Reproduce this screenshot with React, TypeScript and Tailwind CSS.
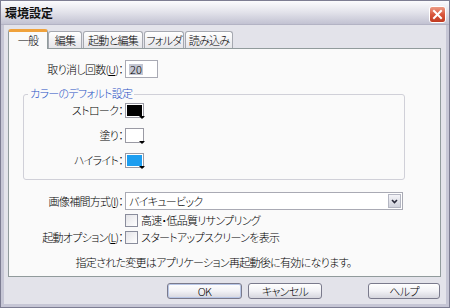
import React from "react";

const font = "[font-family:'Noto_Sans_CJK_JP','Noto_Sans',sans-serif] [font-feature-settings:'palt']";

function Swatch({ color }: { color: string }) {
  return (
    <div className="relative ml-[2px] w-[19px] h-[15px] border border-[#9a9aa4] p-[1px] bg-white">
      <div className="w-full h-full" style={{ background: color }} />
      <div className="absolute right-[-2px] bottom-[-2px] w-0 h-0 border-l-[3px] border-r-[3px] border-t-[3px] border-l-transparent border-r-transparent border-t-black" />
    </div>
  );
}

function Check() {
  return (
    <div className="ml-[2px] w-[13px] h-[13px] border border-[#8a8d9c] bg-gradient-to-br from-[#e4e4e8] to-white" />
  );
}

function Btn({ children, def, className }: { children: React.ReactNode; def?: boolean; className?: string }) {
  return (
    <div
      className={
        "h-[16px] flex items-center justify-center rounded-[3px] border border-[#7a7a8c] bg-gradient-to-b from-white via-[#f2f2f6] to-[#d6d6de] leading-none text-black " +
        (def ? "shadow-[inset_0_0_0_1px_#b8c6e6] " : "") +
        (className || "")
      }
    >
      {children}
    </div>
  );
}

const tab = "h-[17px] ml-[1px] whitespace-nowrap flex items-center justify-center border border-b-0 border-[#a5a8b0] rounded-t-[3px] bg-gradient-to-b from-white to-[#e6e6ea]";

export default function App() {
  return (
    <div className={"w-[450px] h-[308px] flex flex-col border border-[#7d7d92] bg-[#e3e3ea] text-[11px] font-light tracking-[-0.7px] leading-none text-black " + font}>
      {/* title bar */}
      <div className="h-[24px] shrink-0 flex items-center justify-between pl-[4px] pr-[3px] bg-gradient-to-b from-[#fbfbfd] via-[#e2e2ea] to-[#c2c2d2] border-b border-[#b3b3c4]">
        <span className="text-[12px] font-bold tracking-[0px] text-[#111]">環境設定</span>
        <div className="w-[17px] h-[17px] mt-[3px] rounded-[3px] border border-white bg-gradient-to-b from-[#eb9a84] via-[#d9563c] to-[#c03a20] flex items-center justify-center">
          <svg width="11" height="11" viewBox="0 0 11 11">
            <path d="M2 2 L9 9 M9 2 L2 9" stroke="white" strokeWidth="2" strokeLinecap="square" />
          </svg>
        </div>
      </div>

      {/* body */}
      <div className="flex-1 flex flex-col border-x-[3px] border-b-[3px] border-[#c6c6d5] pl-[4px]">
        {/* tabs */}
        <div className="h-[20px] mt-[3px] flex items-end relative z-10">
          <div className="w-[40px] h-[20px] mb-[-1px] whitespace-nowrap flex items-center justify-center border-x border-[#919b9c] border-t-[3px] border-t-[#f0a23c] rounded-t-[3px] bg-[#fafafa] pb-[1px]">
            一般
          </div>
          <div className={tab + " w-[34px] !ml-0"}>編集</div>
          <div className={tab + " w-[60px]"}>起動と編集</div>
          <div className={tab + " w-[40px]"}>フォルダ</div>
          <div className={tab + " w-[48px]"}>読み込み</div>
        </div>

        {/* panel */}
        <div className="w-[433px] h-[229px] border border-[#919b9c] bg-[#fafafa] flex flex-col">
          <div className="mt-[11px] h-[18px] flex items-center">
            <div className="w-[114px] text-right">
              取り消し回数(<span className="underline">U</span>)：
            </div>
            <div className="ml-[2px] w-[33px] h-[18px] border border-[#a9aab4] bg-white flex items-center pl-[3px]">
              <span className="bg-[#c3c6d2] px-[1px] tracking-[0px]">20</span>
            </div>
          </div>

          {/* group box */}
          <div className="relative mt-[16px] ml-[14px] w-[382px] h-[86px] border border-[#d0d0d8] rounded-[3px] flex flex-col pt-[8px] gap-[10px]">
            <div className="absolute -top-[7px] left-[4px] px-[2px] bg-[#fafafa] text-[#1c4fc4]">カラーのデフォルト設定</div>
            <div className="h-[15px] flex items-center">
              <div className="w-[99px] text-right">ストローク：</div>
              <Swatch color="#000000" />
            </div>
            <div className="h-[15px] flex items-center">
              <div className="w-[99px] text-right">塗り：</div>
              <Swatch color="#ffffff" />
            </div>
            <div className="h-[15px] flex items-center">
              <div className="w-[99px] text-right">ハイライト：</div>
              <Swatch color="#1d9ef0" />
            </div>
          </div>

          <div className="mt-[12px] h-[18px] flex items-center">
            <div className="w-[114px] text-right">
              画像補間方式(<span className="underline">I</span>)：
            </div>
            <div className="ml-[2px] w-[278px] h-[18px] border border-[#a9aab4] bg-white flex items-center justify-between pl-[3px] pr-[1px]">
              <span>バイキュービック</span>
              <div className="w-[13px] h-[14px] border border-[#b4b6c2] bg-gradient-to-b from-[#f4f4f8] to-[#d0d2dc] flex items-center justify-center">
                <svg width="7" height="5" viewBox="0 0 7 5">
                  <path d="M1 1 L3.5 3.5 L6 1" stroke="#2a2a3a" strokeWidth="1.6" fill="none" />
                </svg>
              </div>
            </div>
          </div>

          <div className="mt-[4px] h-[13px] flex items-center">
            <div className="w-[114px]" />
            <Check />
            <span className="ml-[3px]">高速・低品質リサンプリング</span>
          </div>
          <div className="mt-[4px] h-[13px] flex items-center">
            <div className="w-[114px] text-right">
              起動オプション(<span className="underline">L</span>)：
            </div>
            <Check />
            <span className="ml-[3px]">スタートアップスクリーンを表示</span>
          </div>

          <div className="mt-[12px] h-[13px] flex items-center justify-center pr-[22px]">
            指定された変更はアプリケーション再起動後に有効になります。
          </div>
        </div>

        {/* buttons */}
        <div className="mt-[6px] flex">
          <Btn def className="ml-[159px] w-[75px]">OK</Btn>
          <Btn className="ml-[6px] w-[74px]">キャンセル</Btn>
          <Btn className="ml-[46px] w-[72px]">ヘルプ</Btn>
        </div>
      </div>
    </div>
  );
}
